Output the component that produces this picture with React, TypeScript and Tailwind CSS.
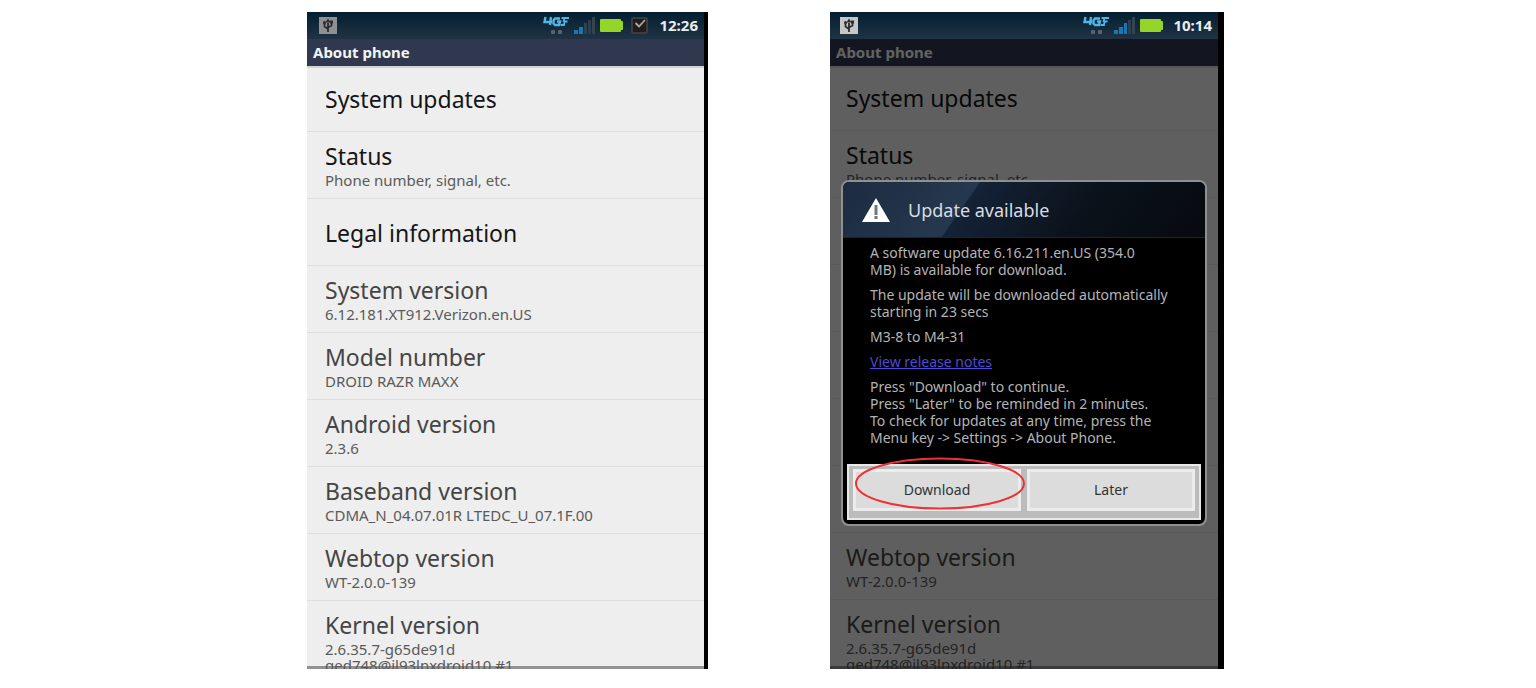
import type { ReactNode } from "react";

type Item = { title: string; detail?: string[]; muted?: boolean };

const items: Item[] = [
  { title: "System updates" },
  { title: "Status", detail: ["Phone number, signal, etc."] },
  { title: "Legal information" },
  { title: "System version", detail: ["6.12.181.XT912.Verizon.en.US"], muted: true },
  { title: "Model number", detail: ["DROID RAZR MAXX"], muted: true },
  { title: "Android version", detail: ["2.3.6"], muted: true },
  { title: "Baseband version", detail: ["CDMA_N_04.07.01R LTEDC_U_07.1F.00"], muted: true },
  { title: "Webtop version", detail: ["WT-2.0.0-139"], muted: true },
  { title: "Kernel version", detail: ["2.6.35.7-g65de91d", "qed748@il93lnxdroid10 #1"], muted: true },
];

function UsbIcon({ bright }: { bright?: boolean }) {
  return (
    <svg width="18" height="17" viewBox="0 0 18 17" aria-hidden="true">
      <rect width="18" height="17" fill={bright ? "#c4c6c8" : "#8f9092"} />
      <path d="M9 15V6M9 12L5.5 9.5V6M9 10.5l3.5-2V5" fill="none" stroke="#2c2c2e" strokeWidth="1.8" />
      <path d="M9 1.500l2.500 4h-5z" fill="#2c2c2e" />
      <circle cx="5.5" cy="5.5" r="1.5" fill="#2c2c2e" />
      <rect x="11" y="3.5" width="3" height="3" fill="#2c2c2e" />
    </svg>
  );
}

function NetworkIcon() {
  return (
    <svg width="27" height="20" viewBox="0 0 27 20" aria-hidden="true">
      <g fill="none" stroke="#4fb6e6" strokeWidth="2.4">
        <path d="M2.500 1L1.500 6H9M8 1L7 9" />
        <path d="M17 2.500h-5L10.500 4.500v3l1.500 1.500h4l1-3.500h-3" />
        <path d="M18.500 2H26M21.500 2L20.500 6M24.500 5.500h-3l-.5 3.500h-3.500" strokeWidth="1.8" />
      </g>
      <rect x="8" y="14" width="4" height="4" rx="1" fill="#59636c" />
      <rect x="15" y="14" width="4" height="4" rx="1" fill="#59636c" />
    </svg>
  );
}

function SignalIcon({ strong }: { strong?: boolean }) {
  return (
    <svg width="22" height="18" viewBox="0 0 22 18" aria-hidden="true">
      <rect x="0" y="13" width="4" height="4" fill="#1479b5" />
      <rect x="5" y="10" width="4" height="7" fill="#1479b5" />
      <rect x="10" y="6" width="3" height="11" fill={strong ? "#1a75b8" : "#2c4452"} />
      <rect x="14" y="3" width="3" height="14" fill="#2c3f4d" />
      <rect x="18" y="0" width="3" height="17" fill="#33434f" />
    </svg>
  );
}

function BatteryIcon() {
  return (
    <svg width="23" height="13" viewBox="0 0 23 13" aria-hidden="true">
      <rect width="21" height="13" rx="1" fill="#95d52a" />
      <rect x="20" y="2" width="3" height="9" rx="1" fill="#95d52a" />
    </svg>
  );
}

function CheckIcon() {
  return (
    <svg width="18" height="17" viewBox="0 0 18 17" aria-hidden="true">
      <rect x="1" y="1" width="15" height="15" rx="1" fill="#211d1b" stroke="#464544" strokeWidth="1.5" />
      <path d="M4.500 6l3.500 3.500L14 3" fill="none" stroke="#a9a9a9" strokeWidth="1.8" />
    </svg>
  );
}

function WarningIcon() {
  return (
    <svg width="30" height="26" viewBox="0 0 30 26" aria-hidden="true">
      <path d="M15 1L29 25H1z" fill="#fff" />
      <path d="M15 8v10M15 19v3" stroke="#70777e" strokeWidth="3" />
    </svg>
  );
}

function Phone({ time, dimmed, children }: { time: string; dimmed?: boolean; children?: ReactNode }) {
  return (
    <section
      className={
        dimmed
          ? "relative flex h-[657px] w-full max-w-[394px] flex-col overflow-hidden border-r-6 border-black bg-[#eee]"
          : "relative flex h-[657px] w-full max-w-[401px] flex-col overflow-hidden border-r-4 border-black bg-[#eee]"
      }
    >
      <header className="shrink-0">
        <div
          className={
            dimmed
              ? "flex h-[27px] items-center bg-linear-to-b from-[#031f30] to-[#203344] pr-[6px] pl-[10px]"
              : "flex h-[27px] items-center bg-linear-to-b from-[#031f30] to-[#203344] pr-[6px] pl-3"
          }
        >
          <UsbIcon bright={dimmed} />
          <div className="ml-auto flex items-center gap-1">
            <NetworkIcon />
            <SignalIcon strong={dimmed} />
            <BatteryIcon />
            {!dimmed && (
              <span className="ml-1">
                <CheckIcon />
              </span>
            )}
            <time className="ml-[6px] text-[15px] leading-[27px] font-bold text-[#e8edf0]">{time}</time>
          </div>
        </div>
        <h1 className="h-[27px] bg-[#303850] pl-[6px] text-[15px] leading-[27px] font-bold text-[#f4f4f4]">
          About phone
        </h1>
      </header>
      <ul className="border-t-2 border-[#d4d4d4]">
        {items.map((item) => (
          <li
            key={item.title}
            className={
              dimmed
                ? "border-b border-[#dedede] px-4 first:-mt-1"
                : "border-b border-[#dedede] px-[18px] first:-mt-[3px]"
            }
          >
            {item.detail ? (
              <div className="min-h-[66px] pt-2">
                <h2
                  className={
                    item.muted
                      ? "text-[23px] leading-8 text-[#454545]"
                      : "text-[23px] leading-8 text-[#151515]"
                  }
                >
                  {item.title}
                </h2>
                {item.detail.map((line) => (
                  <p key={line} className="text-[15px] leading-4 whitespace-nowrap text-[#5a5a5a]">
                    {line}
                  </p>
                ))}
              </div>
            ) : (
              <div className="flex h-[66px] items-center pt-[2px]">
                <h2 className="text-[23px] leading-8 text-[#151515]">{item.title}</h2>
              </div>
            )}
          </li>
        ))}
      </ul>
      <div className="absolute inset-x-0 bottom-0 h-[3px] bg-[#555]/60" />
      {children}
    </section>
  );
}

function UpdateDialog() {
  return (
    <div className="absolute inset-x-0 top-[27px] bottom-0 flex items-start bg-black/60 pt-[141px] pr-[11px] pl-[11px]">
      <div
        role="dialog"
        aria-labelledby="update-title"
        className="relative w-full rounded-lg border-2 border-[#8e9194] bg-black"
      >
        <div className="flex h-[56px] items-center gap-[17px] rounded-t-md border-b border-[#1c242e] bg-[linear-gradient(125deg,#1c2b40_0%,#26384f_34%,#142237_34.5%,#0b121b_65%,#070a0f_100%)] pl-[18px]">
          <WarningIcon />
          <h2 id="update-title" className="text-[18px] leading-6 text-[#d8dde2]">
            Update available
          </h2>
        </div>
        <div className="flex flex-col gap-2 pt-[6px] pr-5 pb-[18px] pl-[27px] text-[14px] leading-[17px] text-[#b4b4b4]">
          <p>
            A software update 6.16.211.en.US (354.0
            <br />
            MB) is available for download.
          </p>
          <p>
            The update will be downloaded automatically
            <br />
            starting in 23 secs
          </p>
          <p>M3-8 to M4-31</p>
          <p>
            <a href="#notes" className="text-[#5048d8] underline">
              View release notes
            </a>
          </p>
          <p>
            Press "Download" to continue.
            <br />
            Press "Later" to be reminded in 2 minutes.
            <br />
            To check for updates at any time, press the
            <br />
            Menu key -&gt; Settings -&gt; About Phone.
          </p>
        </div>
        <div className="mx-1 mb-1 grid grid-cols-2 gap-[6px] border-2 border-[#e8e8e8] bg-[#bcbcbc] px-1 pt-[3px] pb-[7px]">
          <button
            type="button"
            className="h-[42px] border-3 border-[#ececec] bg-[#dcdcdc] text-[14px] leading-5 text-[#333]"
          >
            Download
          </button>
          <button
            type="button"
            className="h-[42px] border-3 border-[#ececec] bg-[#dcdcdc] text-[14px] leading-5 text-[#333]"
          >
            Later
          </button>
        </div>
        <svg
          className="pointer-events-none absolute bottom-[14px] left-3 h-[53px] w-[170px]"
          viewBox="0 0 170 53"
          aria-hidden="true"
        >
          <ellipse cx="85" cy="26.5" rx="84" ry="25" fill="none" stroke="#ee3135" strokeWidth="2" />
        </svg>
      </div>
    </div>
  );
}

export default function App() {
  return (
    <main className="flex min-h-screen items-start justify-center gap-[122px] bg-white pt-3 pr-[5px] font-['Noto_Sans',sans-serif]">
      <Phone time="12:26" />
      <Phone time="10:14" dimmed>
        <UpdateDialog />
      </Phone>
    </main>
  );
}
